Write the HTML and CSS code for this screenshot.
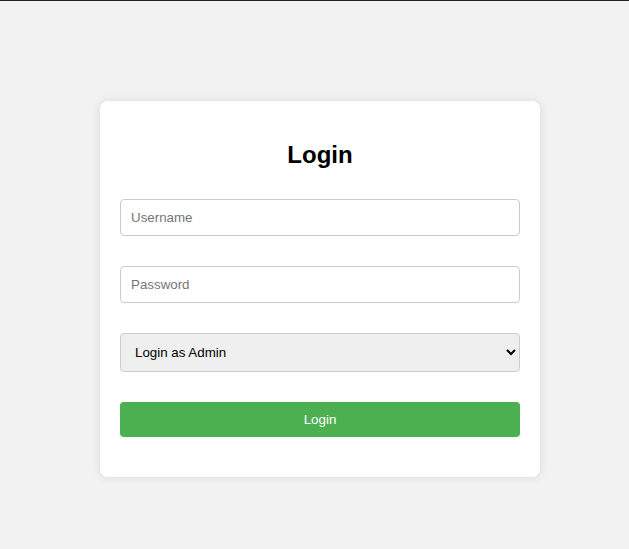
FILE: index.html
```html
<!DOCTYPE html>
<html>
<head>
<meta charset="utf-8">
<link rel="stylesheet" href="styles.css">
</head>
<body>
<div class="topline"></div>
<div class="card">
  <h2 class="title">Login</h2>
  <form class="form">
    <input class="field" type="text" placeholder="Username">
    <input class="field" type="password" placeholder="Password">
    <select class="field select">
      <option>Login as Admin</option>
      <option>Login as User</option>
    </select>
    <button class="btn" type="button">Login</button>
  </form>
</div>
</body>
</html>
```
FILE: styles.css
```css
html, body {
  margin: 0;
  padding: 0;
}
body {
  background: #f2f2f2;
  font-family: "Liberation Sans", Arial, sans-serif;
  height: 549px;
  overflow: hidden;
}
.topline {
  height: 1px;
  background: #222;
}
.card {
  box-sizing: border-box;
  width: 440px;
  margin: 100px 0 0 100px;
  padding: 20px;
  background: #fff;
  border-radius: 8px;
  box-shadow: 0 0 10px rgba(0, 0, 0, 0.1);
}
.title {
  margin: 20px 0 0;
  height: 28px;
  line-height: 28px;
  font-size: 24px;
  font-weight: bold;
  text-align: center;
  color: #000;
}
.form {
  display: flex;
  flex-direction: column;
  gap: 30px;
  margin-top: 30px;
  padding-bottom: 20px;
}
.field {
  box-sizing: border-box;
  width: 400px;
  height: 37px;
  margin: 0;
  padding: 0 10px;
  border: 1px solid #ccc;
  border-radius: 4px;
  font-family: "Liberation Sans", Arial, sans-serif;
  font-size: 13.33px;
  color: #000;
  background: #fff;
  outline: none;
}
.field::placeholder {
  color: #757575;
}
.select {
  height: 39px;
  padding: 0 10px;
  background: #efefef;
}
.btn {
  box-sizing: border-box;
  width: 400px;
  height: 35px;
  margin: 0;
  border: none;
  border-radius: 4px;
  background: #4caf50;
  color: #fff;
  font-family: "Liberation Sans", Arial, sans-serif;
  font-size: 13.33px;
  cursor: pointer;
}
```
